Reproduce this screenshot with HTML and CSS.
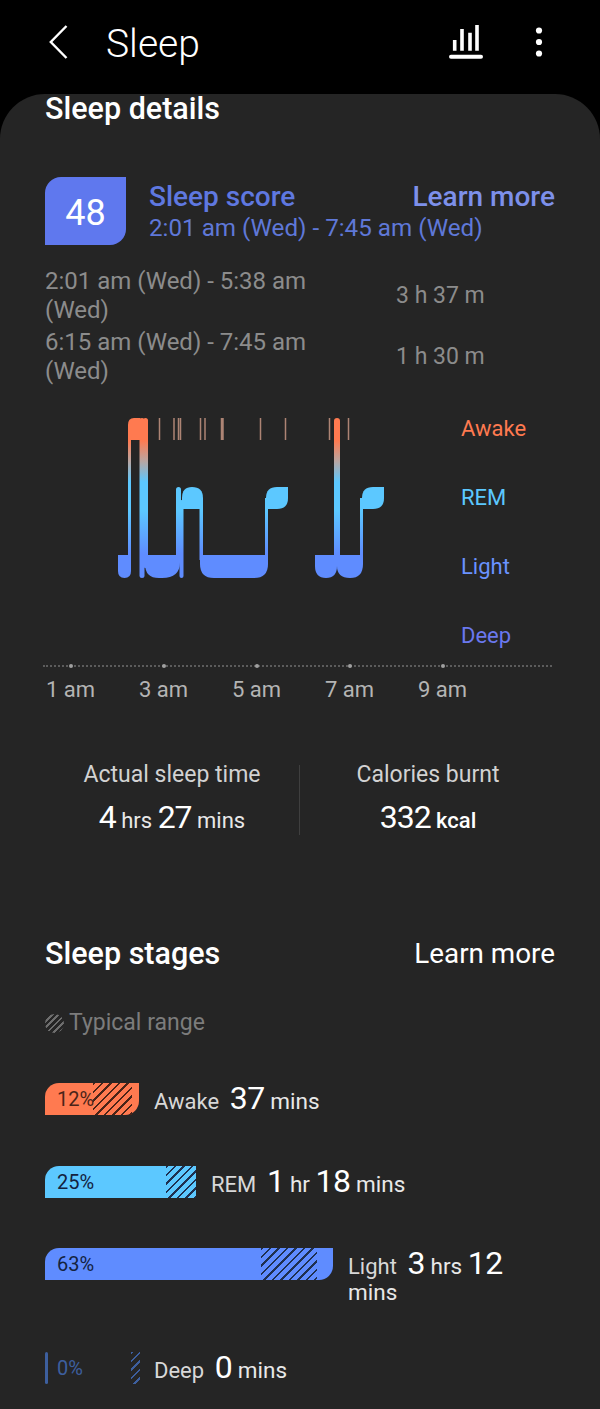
FILE: index.html
```html
<!DOCTYPE html>
<html lang="en">
<head>
    <meta charset="UTF-8">
    <meta name="viewport" content="width=device-width, initial-scale=1.0">
    <title>Sleep</title>
    <link rel="stylesheet" href="styles.css">
</head>
<body>
    <header class="app-bar">
        <svg class="back-icon" width="20" height="34" viewBox="0 0 20 34">
            <polyline points="17.500,1 1.800,17 17.500,33" fill="none" stroke="#fff" stroke-width="2.400"/>
        </svg>
        <h1>Sleep</h1>
        <svg class="trend-icon" width="34" height="34" viewBox="0 0 34 34">
            <path d="M5.700 15V25.700M13 4V25.700M21 7.700V25.700M28 0V25.700" stroke="#fff" stroke-width="3.600" fill="none"/>
            <rect x="0" y="29.700" width="34" height="4" rx="2" fill="#fff"/>
        </svg>
        <svg class="more-icon" width="8" height="30" viewBox="0 0 8 30">
            <circle cx="4" cy="3.500" r="3.100" fill="#fff"/>
            <circle cx="4" cy="15" r="3.100" fill="#fff"/>
            <circle cx="4" cy="26.500" r="3.100" fill="#fff"/>
        </svg>
    </header>

    <main class="panel">
        <h2 class="details-title">Sleep details</h2>

        <div class="score-row">
            <div class="score-badge">48</div>
            <div class="score-text">
                <div class="score-head">
                    <span class="score-label">Sleep score</span>
                    <span class="score-link">Learn more</span>
                </div>
                <div class="score-range">2:01 am (Wed) - 7:45 am (Wed)</div>
            </div>
        </div>

        <div class="session">
            <span class="session-time">2:01 am (Wed) - 5:38 am (Wed)</span>
            <span class="session-length">3 h 37 m</span>
        </div>
        <div class="session session-second">
            <span class="session-time">6:15 am (Wed) - 7:45 am (Wed)</span>
            <span class="session-length">1 h 30 m</span>
        </div>

        <div class="chart">
            <svg class="hypnogram" width="300" height="190" viewBox="100 405 300 190">
                <defs>
                    <linearGradient id="stageFill" gradientUnits="userSpaceOnUse" x1="0" y1="418" x2="0" y2="578">
                        <stop offset="0.14" stop-color="#ff7a50"/>
                        <stop offset="0.27" stop-color="#b9a6a2"/>
                        <stop offset="0.40" stop-color="#5cc8ff"/>
                        <stop offset="0.58" stop-color="#5cc8ff"/>
                        <stop offset="0.85" stop-color="#5f8cff"/>
                    </linearGradient>
                </defs>
                <g fill="url(#stageFill)">
                    <!-- first session -->
                    <path d="M118 555H131V571Q131 578 124.500 578Q118 578 118 571Z"/>
                    <path d="M128 555V425Q128 418 134 418H140.500V440H131V555Z"/>
                    <rect x="139.500" y="418" width="5" height="160" rx="2.500"/>
                    <rect x="143" y="418" width="5" height="150" rx="2.500"/>
                    <path d="M145 555H180V562Q180 578 162 578H159Q145 578 145 564Z"/>
                    <rect x="176" y="487" width="5" height="75" rx="2.500"/>
                    <rect x="179.500" y="500" width="4" height="78" rx="2"/>
                    <path d="M182 509V498Q182 487 192 487Q203 487 203 498V509Z"/>
                    <rect x="199.500" y="500" width="3.500" height="60"/>
                    <path d="M200 555H268V564Q268 578 254 578H214Q200 578 200 564Z"/>
                    <rect x="265" y="498" width="3" height="60"/>
                    <path d="M266 509V498Q266 487 277 487H288V498Q288 509 277 509Z"/>
                    <!-- second session -->
                    <path d="M315 555H337V566Q337 578 326 578Q315 578 315 566Z"/>
                    <rect x="334" y="418" width="6" height="145" rx="3"/>
                    <path d="M337 555H363V564Q363 578 350 578Q337 578 337 566Z"/>
                    <rect x="360" y="498" width="3" height="60"/>
                    <path d="M362 509V498Q362 487 373 487H384V498Q384 509 373 509Z"/>
                </g>
                <path class="awake-ticks" d="M159.500 418V440M174 418V440M178.500 418V440M180.500 418V440M200.500 418V440M205 418V440M221.500 418V440M223 418V440M260.500 418V440M285.500 418V440M329.500 418V440M348.500 418V440"/>
            </svg>
            <ul class="legend">
                <li class="legend-awake">Awake</li>
                <li class="legend-rem">REM</li>
                <li class="legend-light">Light</li>
                <li class="legend-deep">Deep</li>
            </ul>
        </div>

        <div class="axis">
            <div class="axis-line">
                <i></i><i></i><i></i><i></i><i></i>
            </div>
            <div class="axis-labels">
                <span>1 am</span><span>3 am</span><span>5 am</span><span>7 am</span><span>9 am</span>
            </div>
        </div>

        <div class="totals">
            <div class="total">
                <div class="total-label">Actual sleep time</div>
                <div class="total-value"><b>4</b> hrs <b>27</b> mins</div>
            </div>
            <div class="total">
                <div class="total-label">Calories burnt</div>
                <div class="total-value total-strong"><b>332</b> kcal</div>
            </div>
        </div>

        <div class="stages-head">
            <h2>Sleep stages</h2>
            <span>Learn more</span>
        </div>

        <div class="range-key"><i></i>Typical range</div>

        <div class="stage stage-awake">
            <div class="bar"><span>12%</span><i></i></div>
            <p><small>Awake</small> <b>37</b> mins</p>
        </div>
        <div class="stage stage-rem">
            <div class="bar"><span>25%</span><i></i></div>
            <p><small>REM</small> <b>1</b> hr <b>18</b> mins</p>
        </div>
        <div class="stage stage-light">
            <div class="bar"><span>63%</span><i></i></div>
            <p><small>Light</small> <b>3</b> hrs <b>12</b> mins</p>
        </div>
        <div class="stage stage-deep">
            <div class="bar"><span>0%</span><i></i></div>
            <p><small>Deep</small> <b>0</b> mins</p>
        </div>
    </main>
</body>
</html>
```

FILE: styles.css
```css
* {
    box-sizing: border-box;
}

html, body {
    height: 100%;
}

body {
    margin: 0;
    background-color: #000000;
    color: #ffffff;
    font-family: "Roboto", sans-serif;
    overflow: hidden;
}

.app-bar {
    display: flex;
    align-items: center;
    height: 94px;
    padding: 0 57px 10px 49px;
}

.app-bar h1 {
    margin: 0 0 0 37px;
    padding-top: 3px;
    font-size: 39px;
    font-weight: 300;
    flex: 1;
}

.back-icon {
    flex: none;
}

.trend-icon {
    margin-right: 52px;
}

.panel {
    background-color: #252525;
    border-radius: 45px 45px 0 0;
    height: 1315px;
    padding: 0 45px;
}

.panel h2 {
    margin: 0;
    font-size: 30.5px;
    font-weight: 500;
}

.details-title {
    line-height: 30px;
}

/* score summary */
.score-row {
    display: flex;
    margin-top: 53px;
}

.score-badge {
    width: 81px;
    height: 68px;
    flex: none;
    display: flex;
    align-items: center;
    justify-content: center;
    padding-top: 3px;
    background-color: #5f78ee;
    border-radius: 16px 0 16px 0;
    font-size: 36px;
}

.score-text {
    flex: 1;
    margin-left: 23px;
    padding-top: 2px;
}

.score-head {
    display: flex;
    justify-content: space-between;
    font-size: 28px;
    font-weight: 500;
    line-height: 36px;
}

.score-label {
    color: #5f78e0;
}

.score-link {
    color: #7d90ea;
}

.score-range {
    color: #5f78d8;
    font-size: 24.200px;
    line-height: 27px;
}

/* sessions */
.session {
    display: flex;
    align-items: center;
    margin-top: 22px;
    color: #8c8c8c;
    font-size: 24px;
    line-height: 29px;
}

.session-second {
    margin-top: 3px;
}

.session-time {
    width: 351px;
    padding-right: 60px;
}

.session-length {
    padding-bottom: 2px;
    font-size: 23px;
}

/* hypnogram */
.chart {
    display: flex;
    margin-top: 10px;
    height: 269px;
}

.hypnogram {
    margin-left: 55px;
    margin-top: 9px;
    flex: none;
}

.awake-ticks {
    fill: none;
    stroke: #d09c88;
    stroke-width: 1.5;
    opacity: 0.8;
}

.legend {
    list-style: none;
    margin: 19px 0 0 61px;
    padding: 0;
    font-size: 22px;
}

.legend li {
    height: 69px;
    line-height: 28px;
}

.legend-awake {
    color: #ff7a50;
}

.legend-rem {
    color: #5cc8ff;
}

.legend-light {
    color: #6a92ff;
}

.legend-deep {
    color: #6a78ee;
}

/* time axis */
.axis-line {
    position: relative;
    height: 2px;
    margin: 0 3px 0 -2px;
    border-top: 2px dotted #5c5c5c;
}

.axis-line i {
    position: absolute;
    top: -3px;
    width: 4px;
    height: 4px;
    border-radius: 50%;
    background-color: #a0a0a0;
}

.axis-line i:nth-child(1) { left: 26px; }
.axis-line i:nth-child(2) { left: 119px; }
.axis-line i:nth-child(3) { left: 212px; }
.axis-line i:nth-child(4) { left: 305px; }
.axis-line i:nth-child(5) { left: 398px; }

.axis-labels {
    display: flex;
    margin-top: 10px;
    color: #b4b4b4;
    font-size: 22px;
    line-height: 26px;
}

.axis-labels span {
    width: 93px;
    padding-left: 1px;
}

/* totals */
.totals {
    display: flex;
    margin-top: 62px;
}

.total {
    flex: none;
    width: 255px;
    height: 70px;
    text-align: center;
}

.total:first-child {
    border-right: 1px solid #3f3f3f;
}

.total + .total {
    width: 256px;
}

.total-label {
    color: #d2d2d2;
    font-size: 23px;
    line-height: 20px;
}

.total-value {
    margin-top: 13px;
    font-size: 22px;
    line-height: 38px;
    color: #e8e8e8;
}

.total-value b {
    font-size: 32px;
    font-weight: 400;
    letter-spacing: -1px;
    color: #ffffff;
}

.total-strong {
    font-weight: 500;
    color: #ffffff;
}

/* sleep stages */
.stages-head {
    display: flex;
    justify-content: space-between;
    align-items: center;
    margin-top: 102px;
    line-height: 34px;
}

.stages-head span {
    font-size: 27.800px;
}

.range-key {
    display: flex;
    align-items: center;
    margin-top: 38px;
    color: #7c7c7c;
    font-size: 23px;
    line-height: 28px;
}

.range-key i {
    width: 19px;
    height: 19px;
    margin-right: 5px;
    border-radius: 50%;
    background: repeating-linear-gradient(135deg, #6e6e6e 0 2px, transparent 2px 4.5px);
}

.stage {
    display: flex;
    align-items: flex-start;
}

.stage p {
    margin: 5px 0 0 15px;
    flex: 1;
    font-size: 22.500px;
    line-height: 26px;
    color: #e8e8e8;
}

.stage small {
    margin-right: 5px;
    font-size: 22px;
    line-height: 0;
    color: #d8d8d8;
}

.stage b {
    font-size: 32px;
    font-weight: 400;
    line-height: 0;
    letter-spacing: -0.5px;
    color: #ffffff;
}

.bar {
    position: relative;
    height: 32px;
    flex: none;
    border-radius: 14px 0 14px 0;
    padding-left: 12px;
    color: #14233f;
    font-size: 20px;
    line-height: 32px;
}

/* hatching for the typical range */
.bar i {
    position: absolute;
    top: 0;
    bottom: 0;
    background: repeating-linear-gradient(135deg, #1f3050 0 1.5px, transparent 1.5px 6px);
}

.stage-awake {
    margin-top: 46px;
}

.stage-awake .bar {
    width: 94px;
    background-color: #ff7a50;
    color: #4a2418;
}

.stage-awake .bar i {
    left: 48px;
    width: 39px;
    background: repeating-linear-gradient(135deg, #4a2418 0 1.5px, transparent 1.5px 6px);
}

.stage-rem {
    margin-top: 51px;
}

.stage-rem .bar {
    width: 151px;
    background-color: #5cc8ff;
    border-radius: 14px 0 0 0;
}

.stage-rem .bar i {
    left: 121px;
    width: 30px;
}

.stage-light {
    margin-top: 50px;
}

.stage-light .bar {
    width: 288px;
    background-color: #5f8cff;
}

.stage-light .bar i {
    left: 216px;
    width: 56px;
}

.stage-deep {
    margin-top: 47px;
}

.stage-deep .bar {
    width: 95px;
    color: #3d5f9e;
}

.stage-deep .bar::before {
    content: "";
    position: absolute;
    left: 0;
    top: 0;
    bottom: 0;
    width: 3px;
    border-radius: 2px;
    background-color: #3d5f9e;
}

.stage-deep .bar i {
    left: 86px;
    width: 9px;
    background: repeating-linear-gradient(135deg, #3d5f9e 0 1.5px, transparent 1.5px 6px);
}

.stage-deep p {
    margin-left: 14px;
}
```
